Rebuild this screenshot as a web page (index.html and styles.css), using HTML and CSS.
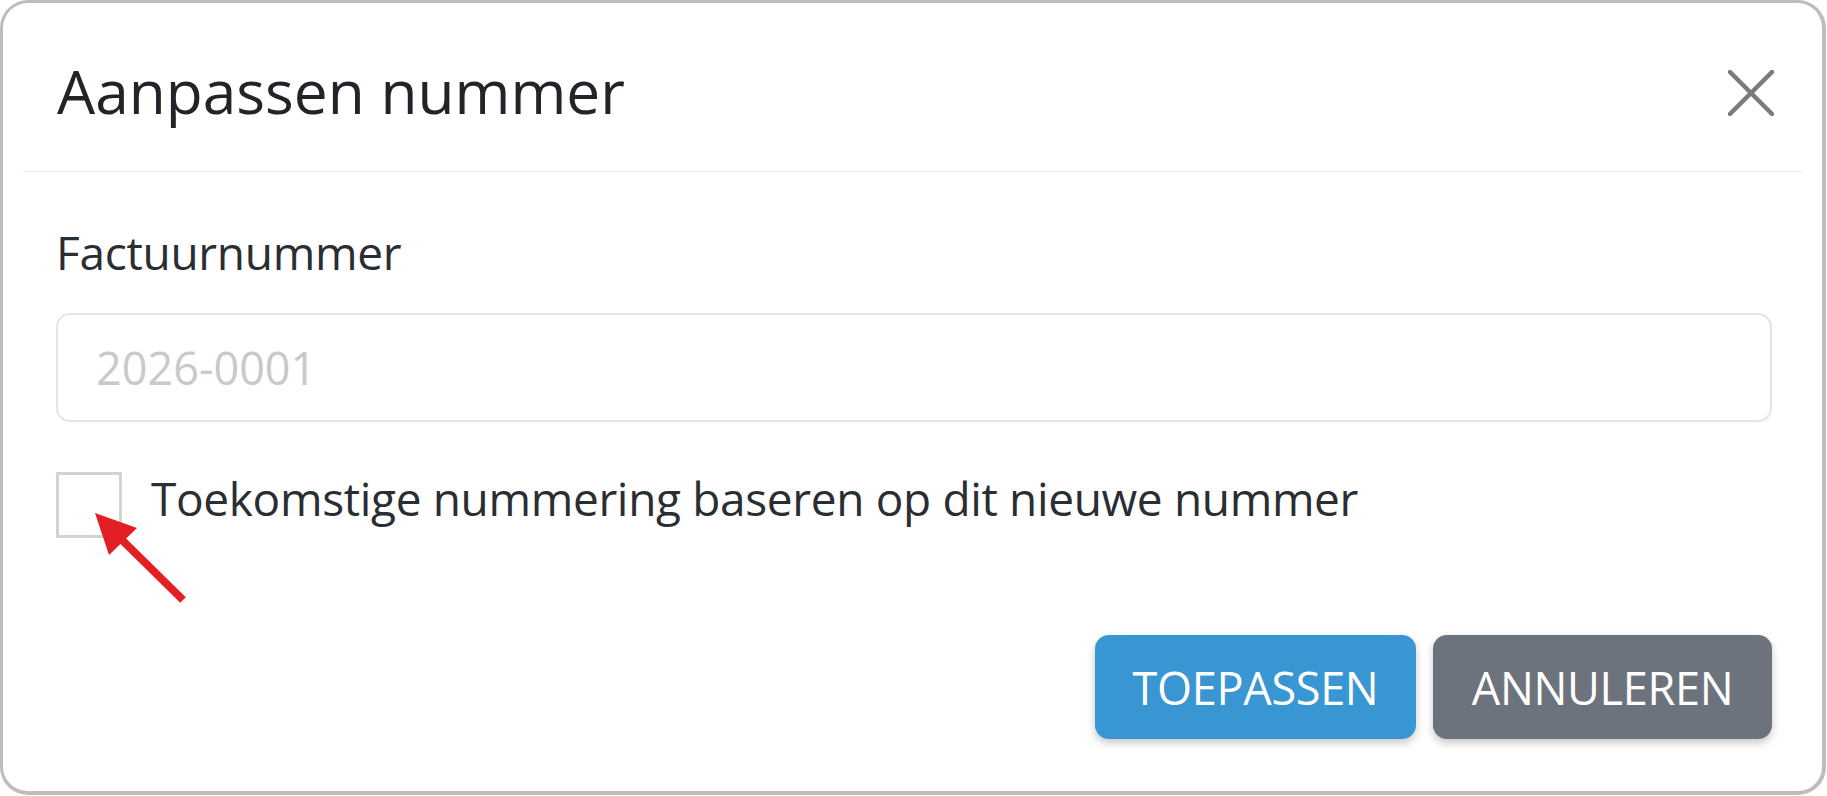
FILE: index.html
```html
<!DOCTYPE html>
<html lang="nl">
<head>
<meta charset="utf-8">
<title>Aanpassen nummer</title>
<link rel="stylesheet" href="styles.css">
</head>
<body>
<div class="dialog">
  <div class="header">
    <h1 class="title">Aanpassen nummer</h1>
    <button class="close" aria-label="Sluiten">
      <svg width="46" height="46" viewBox="0 0 46 46"><path d="M2 2 L44 44 M44 2 L2 44" stroke="#7a7a7a" stroke-width="4.5" stroke-linecap="round" fill="none"/></svg>
    </button>
  </div>
  <div class="body">
    <label class="label">Factuurnummer</label>
    <input class="input" type="text" placeholder="2026-0001">
    <div class="check-row">
      <span class="checkbox"></span>
      <span class="check-text">Toekomstige nummering baseren op dit nieuwe nummer</span>
    </div>
    <div class="actions">
      <button class="btn btn-primary">TOEPASSEN</button>
      <button class="btn btn-secondary">ANNULEREN</button>
    </div>
  </div>
  <svg class="arrow" width="120" height="110" viewBox="0 0 120 110">
    <line x1="40" y1="38" x2="103" y2="100" stroke="#e31e24" stroke-width="8" stroke-linecap="butt"/>
    <polygon points="15,13 57,28 29,55" fill="#e31e24"/>
  </svg>
</div>
</body>
</html>
```

FILE: styles.css
```css
* { box-sizing: border-box; }
html, body { margin: 0; padding: 0; background: #ffffff; }
body {
  font-family: "Open Sans", "Noto Sans", sans-serif;
  color: #212529;
}
.dialog {
  position: relative;
  width: 1826px;
  height: 795px;
  border-style: solid;
  border-color: #bcbdbf;
  border-width: 3px 4px 4px 3px;
  border-radius: 28px;
  background: #fff;
}
.header {
  margin: 0 20px;
  padding: 52px 28px 0 34px;
  height: 169px;
  border-bottom: 1.5px solid #ececec;
  display: flex;
  justify-content: space-between;
  align-items: flex-start;
}
.title {
  margin: 0;
  font-size: 60.4px;
  font-weight: 400;
  line-height: 71px;
  color: #212529;
}
.close {
  border: 0;
  background: none;
  padding: 0;
  margin-top: 15px;
  width: 46px;
  height: 46px;
  cursor: pointer;
}
.close svg { display: block; }
.body {
  padding: 46px 50px 0 53px;
  display: flex;
  flex-direction: column;
}
.label {
  font-size: 46px;
  line-height: 69px;
  color: #2a2e33;
  letter-spacing: -0.3px;
}
.input {
  margin-top: 26px;
  height: 109px;
  width: 100%;
  border: 2px solid #e1e5ea;
  border-radius: 14px;
  padding: 0 0 0 38px;
  font-family: "Open Sans", "Noto Sans", sans-serif;
  font-size: 45px;
  color: #212529;
  outline: none;
}
.input::placeholder { color: #c9c9c9; }
.check-row {
  margin-top: 42px;
  display: flex;
  align-items: flex-start;
  gap: 29px;
}
.checkbox {
  margin-top: 8px;
  width: 66px;
  height: 66px;
  border: 3px solid #d6d3ce;
  background: #fff;
  flex: none;
}
.check-text {
  font-size: 46px;
  line-height: 69px;
  color: #2a2e33;
  letter-spacing: -0.35px;
}
.actions {
  margin-top: 97px;
  display: flex;
  justify-content: flex-end;
  gap: 17px;
}
.btn {
  height: 104px;
  border: 0;
  border-radius: 14px;
  color: #ffffff;
  font-family: "Open Sans", "Noto Sans", sans-serif;
  font-size: 45px;
  letter-spacing: -0.3px;
  box-shadow: 0 4px 8px rgba(0, 0, 0, 0.22);
  cursor: pointer;
}
.btn-primary {
  width: 321px;
  background: #3896d3;
}
.btn-secondary {
  width: 339px;
  background: #6c737c;
}
.arrow {
  position: absolute;
  left: 77px;
  top: 497px;
}
```
